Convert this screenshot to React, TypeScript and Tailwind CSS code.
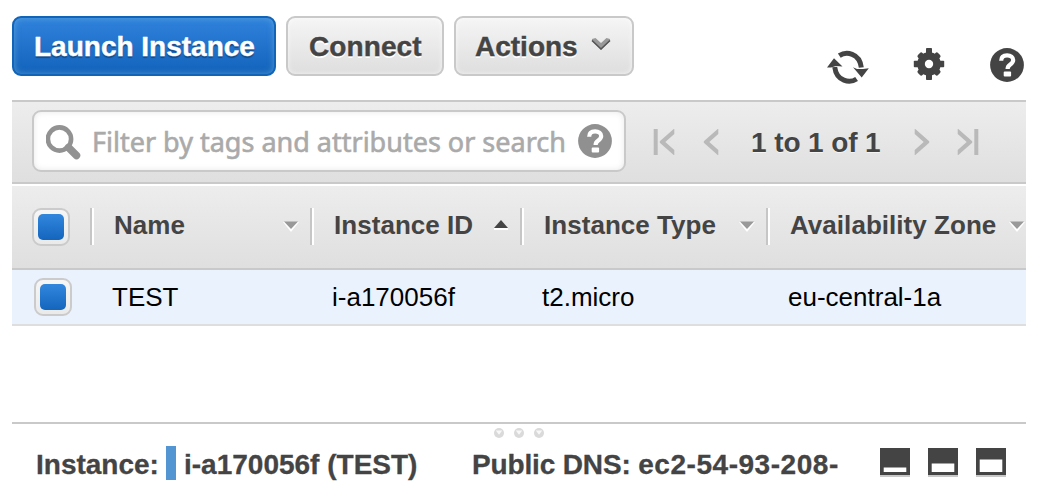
import React from "react";

const helv = "font-['Liberation_Sans',Arial,sans-serif]";

function HelpIcon({ color }: { color: string }) {
  return (
    <svg width="34" height="34" viewBox="0 0 34 34" className="shrink-0">
      <circle cx="17" cy="17" r="16.9" fill={color} />
      <path d="M11.2 12.8c0-3.6 2.400-5.400 5.900-5.400 3.600 0 6.100 1.900 6.100 4.700 0 2.400-1.500 3.500-3.200 4.700-1.600 1.100-2.400 1.900-2.400 4.200" fill="none" stroke="#fff" strokeWidth="4.200" />
      <rect x="13.700" y="23.600" width="7.400" height="4.800" rx="1" fill="#fff" />
    </svg>
  );
}

function RefreshIcon() {
  return (
    <svg width="42" height="34" viewBox="0 0 42 34" fill="none">
      <path d="M12.3 5.6C19 1.2 32.5 2.6 34.3 17.5" stroke="#444" strokeWidth="5" />
      <path d="M26 17.2 30 19 36 19 41.8 18.2 34.7 27.6Z" fill="#444" />
      <path d="M29.6 29C23 33.4 9.6 31.8 7.7 17" stroke="#444" strokeWidth="5" />
      <path d="M0 17.5 7 8.2 15.5 16.6 9 16 4 17.6Z" fill="#444" />
    </svg>
  );
}

function GearIcon() {
  return (
    <svg width="32" height="34" viewBox="-16 -17 32 34" fill="#444">
      <circle r="11.8" />
      <rect x="-3" y="-16" width="6" height="32" rx="0.8" />
      <rect x="-15.2" y="-3.2" width="30.4" height="6.4" rx="0.8" />
      <rect x="-14.2" y="-3.2" width="28.4" height="6.4" rx="1.8" transform="rotate(45)" />
      <rect x="-14.2" y="-3.2" width="28.4" height="6.4" rx="1.8" transform="rotate(-45)" />
      <circle r="4.2" fill="#fff" />
    </svg>
  );
}

function PageArrow({ flip, end }: { flip?: boolean; end?: boolean }) {
  return (
    <svg width="26" height="28" viewBox="0 0 26 28" className={flip ? "-scale-x-100" : ""}>
      {end && <rect x="0.7" y="1" width="4" height="26" fill="#b9b9b9" />}
      <path d="M21.300 1v5l-9 8 9 8v5h-.6L6.8 14.8v-1.6L20.700 1Z" fill="#b9b9b9" />
    </svg>
  );
}

function Checkbox() {
  return (
    <span className="flex size-[38px] shrink-0 items-center justify-center rounded-[9px] border-2 border-[#cbcbcb] bg-linear-to-b from-[#f6f6f6] to-[#eaeaea]">
      <span className="size-[26px] rounded-[5px] bg-linear-to-b from-[#3287dd] to-[#1365bd]" />
    </span>
  );
}

function Sort({ up }: { up?: boolean }) {
  return (
    <svg width="16" height="14" viewBox="0 0 16 14" className="shrink-0">
      {up ? (
        <>
          <path d="M1 10h14v2H1Z" fill="#fff" />
          <path d="M8 2 15 10H1Z" fill="#444" />
        </>
      ) : (
        <>
          <path d="M0 4 8 14 16 4Z" fill="#fff" />
          <path d="M1 3.500h14L8 11Z" fill="#999" />
        </>
      )}
    </svg>
  );
}

function Head({ label, width, up }: { label: string; width: string; up?: boolean }) {
  return (
    <div className={`${width} flex shrink-0 items-start`}>
      <span className="h-[37px] w-1 border-l-2 border-[#c6c6c6] bg-white" />
      <span className="flex-1 pl-5 leading-[34px] tracking-[0.04px] whitespace-nowrap">{label}</span>
      <span className="-mr-px pt-[10px] pr-3">
        <Sort up={up} />
      </span>
    </div>
  );
}

function PaneIcon({ top, height }: { top: number; height: number }) {
  return (
    <svg width="30" height="29" viewBox="0 0 30 29">
      <rect width="30" height="27" fill="#444" />
      <rect y="27" width="30" height="2" fill="#c8c8c8" />
      <rect x="3.7" y={top} width="22.6" height={height} fill="#fff" />
    </svg>
  );
}

function Dot() {
  return (
    <svg width="10" height="10" viewBox="0 0 10 10">
      <circle cx="5" cy="5" r="5" fill="#dadada" />
      <path d="M1.8 2.500h6.400L5 6.800Z" fill="#f8f8f8" />
    </svg>
  );
}

const grayButton =
  "flex h-[60px] items-center rounded-[9px] border-2 border-[#c9c9c9] bg-linear-to-b from-[#f5f5f5] to-[#dedede] pt-0.5 text-[#444] shadow-[inset_0_0_5px_#ffffffb0] [text-shadow:0_2px_0_#fff]";

export default function App() {
  return (
    <div className={`${helv} h-[494px] w-[1054px] overflow-hidden bg-white pl-3 text-[#444]`}>
      <div className="w-[1014px]">
        <header className="flex h-[100px] items-start pt-4 text-[28px] font-bold [-webkit-text-stroke:0.4px_currentColor]">
          <button className="flex h-[60px] w-[264px] items-center rounded-[9px] border-2 border-[#1264b8] bg-linear-to-b from-[#2f82dc] to-[#1263bb] pt-0.5 pl-5 whitespace-nowrap text-white shadow-[inset_0_0_6px_#72b5dca0] [text-shadow:0_2px_1px_#00000050]">
            Launch Instance
          </button>
          <button className={`${grayButton} ml-[10px] w-[158px] pl-[21px] tracking-[0.1px]`}>Connect</button>
          <button className={`${grayButton} ml-[10px] w-[180px] pl-[19px]`}>
            Actions
            <svg width="20" height="14" viewBox="0 0 20 14" className="mb-[6px] ml-[13px]">
              <path d="M1 2 4.5 1 10 6l5.500-5L19 2v2l-9 9-9-9Z" fill="#999" />
              <path d="M1 3.500 10 12l9-8.500" fill="none" stroke="#555" strokeWidth="1.600" />
            </svg>
          </button>
          <div className="ml-auto flex pt-[34px] pr-0.5">
            <RefreshIcon />
            <div className="-mt-[3px] ml-11">
              <GearIcon />
            </div>
            <div className="-mt-[2px] ml-[45px]">
              <HelpIcon color="#444" />
            </div>
          </div>
        </header>

        <div className="flex h-[84px] items-center border-y-2 border-[#c9c9c9] bg-linear-to-b from-[#ededed] to-[#dfdfdf] pl-5">
          <div className="mb-[2px] flex h-[62px] w-[594px] items-center rounded-[9px] border-2 border-[#c9c9c9] bg-white pl-3 shadow-[inset_0_0_6px_#00000018]">
            <svg width="35" height="35" viewBox="0 0 35 35" fill="none" stroke="#929292" className="mt-[3px] shrink-0">
              <circle cx="13.5" cy="14" r="11.600" strokeWidth="4.600" />
              <path d="m22.500 22.500 8 8" strokeWidth="7.500" strokeLinecap="round" />
            </svg>
            <span className="ml-[11px] w-[487px] shrink-0 pt-[3px] font-['Noto_Sans',sans-serif] text-[27px] whitespace-nowrap text-[#aaa] [-webkit-text-stroke:0.6px_#aaa]">
              Filter by tags and attributes or search
            </span>
            <span className="-ml-px">
              <HelpIcon color="#909090" />
            </span>
          </div>
          <div className="ml-[27px] flex items-center text-[28px] font-bold whitespace-nowrap">
            <PageArrow end />
            <span className="ml-[18px]"><PageArrow /></span>
            <span className="ml-7 w-[131px] pt-px tracking-[-0.1px] [text-shadow:0_1px_0_#f4f4f4]">1 to 1 of 1</span>
            <span className="ml-7"><PageArrow flip /></span>
            <span className="ml-[17px]"><PageArrow flip end /></span>
          </div>
        </div>

        <div className="mt-[2px] flex h-[84px] items-start overflow-hidden border-b-2 border-[#c9c9c9] bg-linear-to-b from-[#ededed] to-[#dfdfdf] pt-[22px] pl-5 text-[26px] font-bold">
          <Checkbox />
          <div className="ml-5 flex">
            <Head label="Name" width="w-[220px]" />
            <Head label="Instance ID" width="w-[210px]" up />
            <Head label="Instance Type" width="w-[246px]" />
            <Head label="Availability Zone" width="w-[270px]" />
          </div>
        </div>

        <div className="flex h-14 items-center border-b-2 border-[#dedede] bg-[#eaf2fe] pl-[22px] text-[26px] text-black">
          <Checkbox />
          <span className="ml-10 w-[220px]">TEST</span>
          <span className="w-[210px]">i-a170056f</span>
          <span className="w-[246px]">t2.micro</span>
          <span>eu-central-1a</span>
        </div>

        <section className="mt-24 border-t-2 border-[#c9c9c9]">
          <div className="flex h-[14px] items-end justify-center gap-[10px]">
            <Dot /><Dot /><Dot />
          </div>
          <div className="flex h-[50px] items-center pl-6 text-[28px] font-bold whitespace-nowrap [-webkit-text-stroke:0.3px_currentColor]">
            <span className="w-[130px] pt-[3px]">Instance:</span>
            <span className="h-[34px] w-[10px] bg-[#5295d2]" />
            <span className="ml-2 w-[288px] pt-[3px]">i-a170056f (TEST)</span>
            <span className="w-[408px] pt-[3px] tracking-[-0.15px]">
              Public DNS: <span className="tracking-[0.54px]">ec2-54-93-208-</span>
            </span>
            <span className="-mt-[2px] flex gap-[18px]">
              <PaneIcon top={19.5} height={4.5} />
              <PaneIcon top={15.5} height={8.5} />
              <PaneIcon top={11.5} height={12.5} />
            </span>
          </div>
        </section>
      </div>
    </div>
  );
}
